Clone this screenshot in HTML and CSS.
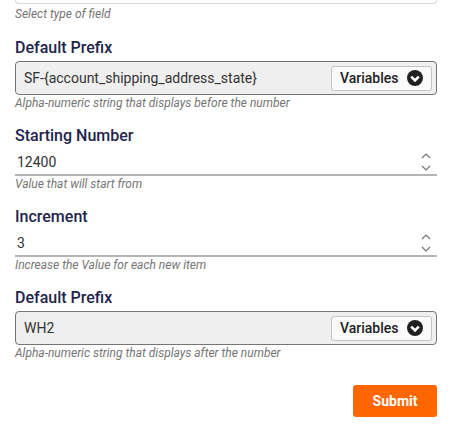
FILE: index.html
```html
<!DOCTYPE html>
<html lang="en">
<head>
    <meta charset="UTF-8">
    <meta name="viewport" content="width=device-width, initial-scale=1.0">
    <title>Field Settings</title>
    <link rel="stylesheet" href="styles.css">
</head>
<body>
    <form class="form">
        <div class="field field-first">
            <div class="select-end"></div>
            <p class="hint">Select type of field</p>
        </div>

        <div class="field field-tall">
            <label class="label">Default Prefix</label>
            <div class="box">
                <span class="box-value">SF-{account_shipping_address_state}</span>
                <button type="button" class="var-btn">
                    Variables
                    <svg class="var-icon" viewBox="0 0 16 16" width="16" height="16">
                        <circle cx="8" cy="8" r="8" fill="#212121"/>
                        <path d="M4.2 6.6 8 10.4l3.8-3.8" fill="none" stroke="#fff" stroke-width="2.6"/>
                    </svg>
                </button>
            </div>
            <p class="hint">Alpha-numeric string that displays before the number</p>
        </div>

        <div class="field">
            <label class="label">Starting Number</label>
            <div class="number">
                <span class="number-value">12400</span>
                <span class="stepper">
                    <svg viewBox="0 0 10 6" width="10" height="6"><path d="M1 5l4-4 4 4" fill="none" stroke="#757575" stroke-width="1.2"/></svg>
                    <svg viewBox="0 0 10 6" width="10" height="6"><path d="M1 1l4 4 4-4" fill="none" stroke="#757575" stroke-width="1.2"/></svg>
                </span>
            </div>
            <p class="hint">Value that will start from</p>
        </div>

        <div class="field">
            <label class="label">Increment</label>
            <div class="number">
                <span class="number-value">3</span>
                <span class="stepper">
                    <svg viewBox="0 0 10 6" width="10" height="6"><path d="M1 5l4-4 4 4" fill="none" stroke="#757575" stroke-width="1.2"/></svg>
                    <svg viewBox="0 0 10 6" width="10" height="6"><path d="M1 1l4 4 4-4" fill="none" stroke="#757575" stroke-width="1.2"/></svg>
                </span>
            </div>
            <p class="hint">Increase the Value for each new item</p>
        </div>

        <div class="field">
            <label class="label">Default Prefix</label>
            <div class="box">
                <span class="box-value">WH2</span>
                <button type="button" class="var-btn">
                    Variables
                    <svg class="var-icon" viewBox="0 0 16 16" width="16" height="16">
                        <circle cx="8" cy="8" r="8" fill="#212121"/>
                        <path d="M4.2 6.6 8 10.4l3.8-3.8" fill="none" stroke="#fff" stroke-width="2.6"/>
                    </svg>
                </button>
            </div>
            <p class="hint">Alpha-numeric string that displays after the number</p>
        </div>

        <div class="actions">
            <button type="button" class="submit">Submit</button>
        </div>
    </form>
</body>
</html>
```

FILE: styles.css
```css
html, body {
    height: 100%;
}

body {
    margin: 0;
    font-family: Roboto, "Liberation Sans", sans-serif;
    background-color: #ffffff;
    overflow: hidden;
}

.form {
    width: 422px;
    margin-left: 15px;
}

.field {
    height: 81px;
}

.field-first {
    height: 38px;
}

.field-tall {
    height: 88px;
}

.select-end {
    height: 3px;
    border: 1px solid #d6d6d6;
    border-top: none;
    border-radius: 0 0 4px 4px;
}

.label {
    display: block;
    height: 20px;
    margin-bottom: 3px;
    font-size: 16px;
    font-weight: 500;
    line-height: 20px;
    color: #23244a;
}

.hint {
    margin: 0;
    font-size: 12px;
    font-style: italic;
    line-height: 16px;
    color: #757575;
}

.field-first .hint {
    margin-top: 2px;
}

.box {
    display: flex;
    align-items: center;
    justify-content: space-between;
    box-sizing: border-box;
    height: 34px;
    padding: 0 4px 0 8px;
    background: #efefef;
    border: 1px solid #757575;
    border-radius: 4px;
}

.box-value {
    font-size: 14px;
    color: #333333;
}

.var-btn {
    display: flex;
    align-items: center;
    justify-content: space-between;
    box-sizing: border-box;
    width: 101px;
    height: 25px;
    padding: 0 8px;
    background: #fafafa;
    border: 1px solid #c4c4c4;
    border-radius: 3px;
    font-family: inherit;
    font-size: 14px;
    font-weight: 500;
    color: #212121;
}

.number {
    display: flex;
    align-items: center;
    justify-content: space-between;
    box-sizing: border-box;
    height: 27px;
    padding: 0 6px 0 2px;
    border-bottom: 2px solid #b5b5b5;
}

.number-value {
    font-size: 14px;
    color: #333333;
}

.stepper {
    display: flex;
    flex-direction: column;
    gap: 6px;
}

.stepper svg {
    display: block;
}

.actions {
    display: flex;
    justify-content: flex-end;
    margin-top: 16px;
}

.submit {
    width: 84px;
    height: 32px;
    background-color: #ff6600;
    color: #ffffff;
    border: none;
    border-radius: 3px;
    font-family: inherit;
    font-size: 14px;
    font-weight: 700;
}
```
